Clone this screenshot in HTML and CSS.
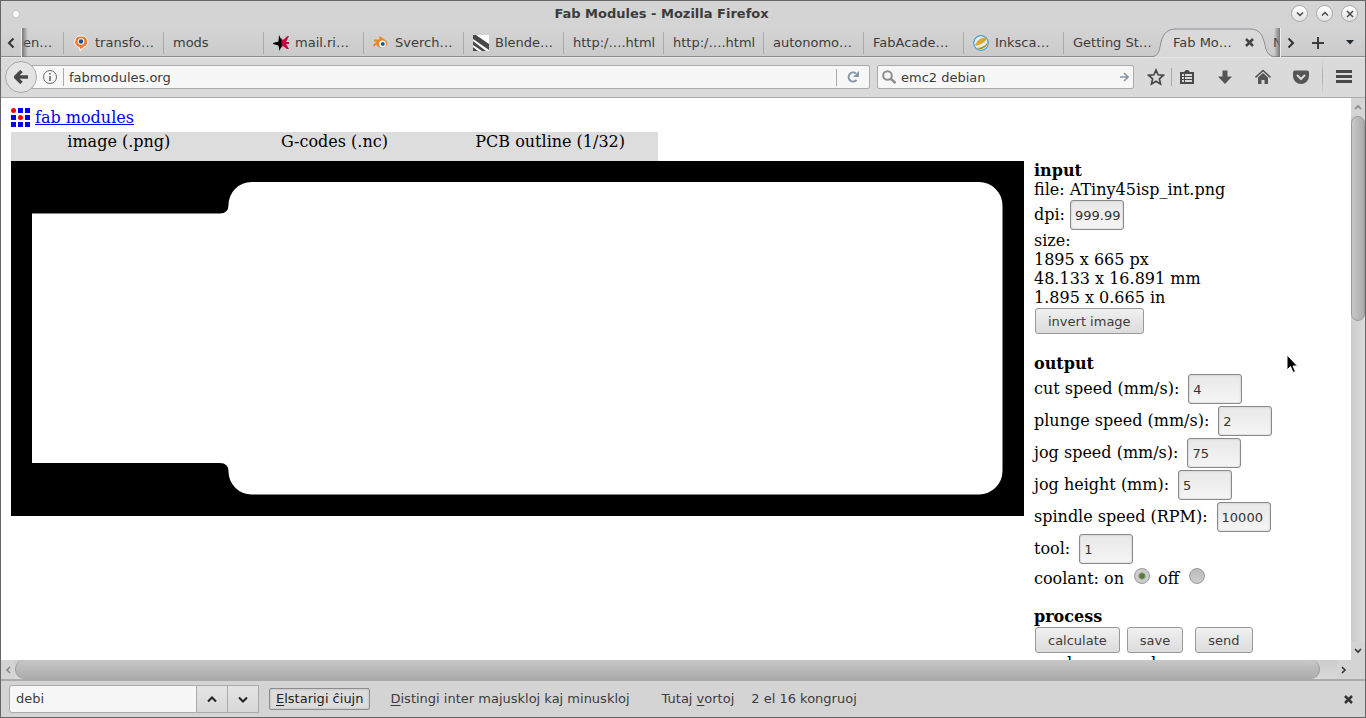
FILE: index.html
```html
<!DOCTYPE html>
<html lang="eo">
<head>
<meta charset="utf-8">
<title>Fab Modules</title>
<link rel="stylesheet" href="styles.css">
</head>
<body>
<div class="window">
  <header class="titlebar">
    <span class="dot"></span>
    <h1 class="title">Fab Modules - Mozilla Firefox</h1>
    <div class="window-buttons">
      <button class="round" aria-label="Minimize"><svg width="8" height="8"><path d="M1 2.5l3 3 3-3"/></svg></button>
      <button class="round" aria-label="Maximize"><svg width="8" height="8"><path d="M1 5.5l3-3 3 3"/></svg></button>
      <button class="round" aria-label="Close"><svg width="8" height="8"><path d="M1 1l6 6M7 1l-6 6"/></svg></button>
    </div>
  </header>

  <nav class="tabstrip">
    <button class="scroll-tabs" aria-label="Previous tabs"><svg width="8" height="12"><path d="M6.500 1.500L2 6l4.500 4.500"/></svg></button>
    <div class="tabs">
      <button class="tab first">en…</button>
      <button class="tab"><svg width="16" height="16"><path d="M8 1a5.800 5.800 0 0 0-3 11l2 1.200V16l3-3.500A5.800 5.800 0 0 0 8 1z" fill="#f07830" stroke="#fff"/><circle cx="8" cy="6.500" r="3.300" fill="#fff"/><circle cx="8" cy="6.500" r="2.200" fill="#20508c"/></svg>transfo…</button>
      <button class="tab">mods</button>
      <button class="tab"><svg width="16" height="16"><path d="M8 3l2 2 4.500-4H16l-3 6h3v2h-3l3 5h-2l-4-3-2 2z" fill="#c8003c"/><path d="M6 0l2.500 5v6L6.500 16 5.500 10.500 0 9V8l5.500-1.500z" fill="#000"/></svg>mail.ri…</button>
      <button class="tab"><svg width="16" height="16"><path d="M1 4.500h6L5.500 2.500 7.500 1.500l6.500 5a5.500 4.800 0 1 1-10.500 3L1 11.500 0 10l4-3.500H1z" fill="#ee8420"/><circle cx="9.500" cy="9" r="3.400" fill="#fff"/><circle cx="9.800" cy="9" r="2" fill="#205a94"/></svg>Sverch…</button>
      <button class="tab"><svg width="16" height="16"><path fill="#fff" d="M0 0h16v16H0z"/><path d="M0 0h3l13 9v6L0 4zM0 6l13 10H9L0 10zM0 12l5 4H0z" fill="#484848"/></svg>Blende…</button>
      <button class="tab">http:/….html</button>
      <button class="tab">http:/….html</button>
      <button class="tab">autonomo…</button>
      <button class="tab">FabAcade…</button>
      <button class="tab"><svg width="16" height="16"><circle cx="8" cy="8" r="7.300" fill="#e2edf2" stroke="#4e9fca" stroke-width="1.200"/><path d="M2 11C3 6 8 2 13 2.500c2 2-3 7-11 8.500z" fill="#dba82c"/><path d="M4 13c5 0 10-3 11-7 0 5-5 9-9 8z" fill="#b58b24"/></svg>Inksca…</button>
      <button class="tab last-plain">Getting St…</button>
      <div class="tab active">
        <svg class="tab-shape" width="130" height="31"><path d="M0 29.500C9 29.500 10.500 26 12 19 14 8 17 1.500 28 1.500H102C112 1.500 115 8 117 17 118.500 25 121 29.500 130 29.500V31H0z" fill="#d9d9d9"/><path d="M0 29C9 29 10.500 26 12 19 14 8 17 1 28 1H102C112 1 115 8 117 17 118.500 25 121 29 130 29" fill="none" stroke="#8d9096"/></svg>
        <span class="tab-label">Fab Mo…</span>
        <button class="tab-close" aria-label="Close tab"><svg width="9" height="9"><path d="M1 1l7 7M8 1L1 8"/></svg></button>
      </div>
      <button class="tab next">N</button>
    </div>
    <button class="scroll-tabs right" aria-label="Next tabs"><svg width="8" height="12"><path d="M1.500 1.500L6 6l-4.500 4.500"/></svg></button>
    <button class="strip-button" aria-label="New tab"><svg width="12" height="12"><path d="M6 0v12M0 6h12" stroke="#3c3c3c" stroke-width="2"/></svg></button>
    <button class="strip-button" aria-label="List all tabs"><svg width="8" height="5"><path d="M0 0h8L4 4.500z" fill="#222c38"/></svg></button>
  </nav>

  <div class="toolbar">
    <button class="back" aria-label="Back"><svg width="14" height="14"><path d="M7.500 1L1.500 7l6 6M2 7h12" fill="none" stroke="#484848" stroke-width="3.400"/></svg></button>
    <div class="urlbar">
      <svg width="16" height="16"><circle cx="8" cy="8" r="6.500" fill="none" stroke="#6a6a6a"/><path d="M8 7v5M8 4v1.500" fill="none" stroke="#666" stroke-width="1.600"/></svg>
      <input class="url" type="text" aria-label="Address" value="fabmodules.org">
      <button class="reload" aria-label="Reload"><svg width="12" height="12"><path d="M9.500 9A4.500 4.500 0 1 1 9 2.500" fill="none" stroke="#8496a8" stroke-width="2"/><path d="M12 0v6H6z" fill="#8496a8"/></svg></button>
    </div>
    <div class="searchbar">
      <svg width="14" height="14"><circle cx="5.500" cy="5.500" r="4.300" fill="none" stroke="#8e8e8e" stroke-width="2"/><path d="M8.500 8.500l5 4.500" stroke="#8e8e8e" stroke-width="2.400"/></svg>
      <input class="query" type="text" aria-label="Search" value="emc2 debian">
      <button class="go" aria-label="Search"><svg width="9" height="10"><path d="M0 5h8M4 1l4 4-4 4" fill="none" stroke="#8496a8" stroke-width="1.600"/></svg></button>
    </div>
    <button class="tool star" aria-label="Bookmark"><svg width="18" height="18"><path d="M9 2l2.100 4.800 5.200.5-3.900 3.500 1.100 5.200L9 13.300 4.500 16l1.100-5.200L1.700 7.300l5.200-.5z" fill="none" stroke="#484848" stroke-width="1.700"/></svg></button>
    <button class="tool list" aria-label="Bookmarks"><svg width="16" height="16"><path d="M1 3h4l2-2h2l2 2h4v12H1z" fill="#484848"/><path d="M3 5h2v2H3zM6 5h7v2H6zM3 8h2v2H3zM6 8h7v2H6zM3 11h2v2H3zM6 11h7v2H6z" fill="#dadada"/></svg></button>
    <button class="tool" aria-label="Downloads"><svg width="16" height="16"><path d="M5.500 1.500h5v6H15L8 15 1 7.500h4.500z" fill="#555"/></svg></button>
    <button class="tool" aria-label="Home"><svg width="16" height="16"><path d="M.5 8.500L8 1.500l7.500 7" fill="none" stroke="#555" stroke-width="1.600"/><path d="M3 8.500l5-4.500 5 4.500V15H9.500v-4h-3v4H3z" fill="#555"/></svg></button>
    <button class="tool" aria-label="Pocket"><svg width="16" height="16"><path d="M2 1.500h12a2 2 0 0 1 2 2V7a8 8 0 0 1-16 0V3.500a2 2 0 0 1 2-2z" fill="#555"/><path d="M4 6l4 4 4-4" fill="none" stroke="#dadada" stroke-width="2"/></svg></button>
    <button class="tool menu" aria-label="Menu"><svg width="16" height="14"><path d="M0 0h16v3H0zM0 5h16v3H0zM0 10h16v3H0z" fill="#484848"/></svg></button>
  </div>

  <div class="viewport">
    <main class="page">
      <a class="brand" href="#"><svg width="19" height="19"><path d="M7 0h5v5H7zM14 0h5v5h-5zM0 7h5v5H0zM14 7h5v5h-5zM0 14h5v5H0zM7 14h5v5H7zM14 14h5v5h-5z" fill="#00f"/><circle cx="2.500" cy="2.500" r="2.500" fill="red"/><circle cx="9.500" cy="9.500" r="2.500" fill="red"/></svg><span>fab modules</span></a>
      <div class="choices"><span>image (.png)</span><span>G-codes (.nc)</span><span>PCB outline (1/32)</span></div>
      <div class="workspace">
        <svg class="board" viewBox="0 0 1013 355"><path fill="#000" d="M0 0h1013v355H0z"/><path fill="#fff" d="M21 52.500H209Q217.500 52.500 217.500 44A23 23 0 0 1 240.500 21H968A23.500 23.500 0 0 1 991.500 44.500V310A23.500 23.500 0 0 1 968 333.500H240.500A23 23 0 0 1 217.500 310.500Q217.500 302 209 302H21z"/></svg>
        <form class="controls">
          <h2>input</h2>
          <p>file: ATiny45isp_int.png</p>
          <div class="field tight"><label for="dpi">dpi:</label><input id="dpi" type="text" value="999.99"></div>
          <p>size:</p>
          <p>1895 x 665 px</p>
          <p>48.133 x 16.891 mm</p>
          <p>1.895 x 0.665 in</p>
          <div class="actions"><button type="button">invert image</button></div>
          <h2 class="section">output</h2>
          <div class="field"><label for="cut">cut speed (mm/s):</label><input id="cut" type="text" value="4"></div>
          <div class="field"><label for="plunge">plunge speed (mm/s):</label><input id="plunge" type="text" value="2"></div>
          <div class="field"><label for="jog">jog speed (mm/s):</label><input id="jog" type="text" value="75"></div>
          <div class="field"><label for="height">jog height (mm):</label><input id="height" type="text" value="5"></div>
          <div class="field"><label for="spindle">spindle speed (RPM):</label><input id="spindle" type="text" value="10000"></div>
          <div class="field"><label for="tool">tool:</label><input id="tool" type="text" value="1"></div>
          <div class="coolant"><label for="on">coolant: on</label><input id="on" type="radio" name="coolant" checked><label for="off">off</label><input id="off" type="radio" name="coolant"></div>
          <h2 class="section">process</h2>
          <div class="actions"><button type="button">calculate</button><button type="button">save</button><button type="button" class="send">send</button></div>
          <p>send command:</p>
        </form>
      </div>
      <svg class="cursor" width="12" height="20"><path d="M1 1v15l3.500-3.500 2.500 6 2.500-1-2.500-5.500h4.500z" fill="#000" stroke="#fff"/></svg>
    </main>
    <div class="vbar">
      <svg class="arrow faint" width="8" height="6"><path d="M1 5l3-3 3 3"/></svg>
      <div class="vtrack"><div class="vthumb"></div></div>
      <svg class="arrow" width="8" height="6"><path d="M1 1l3 3 3-3"/></svg>
    </div>
  </div>
  <div class="hbar">
    <svg class="arrow faint" width="6" height="8"><path d="M5 1L2 4l3 3"/></svg>
    <div class="htrack"><div class="hthumb"></div></div>
    <svg class="arrow" width="6" height="8"><path d="M1 1l3 3-3 3"/></svg>
    <span class="corner"></span>
  </div>

  <footer class="findbar">
    <div class="find">
      <input type="text" aria-label="Find" value="debi">
      <button aria-label="Previous match"><svg width="10" height="7"><path d="M1 5.500L5 1.500l4 4"/></svg></button>
      <button aria-label="Next match"><svg width="10" height="7"><path d="M1 1.500l4 4 4-4"/></svg></button>
    </div>
    <button class="highlight"><u>E</u>lstarigi ĉiujn</button>
    <button class="plain case"><u>D</u>istingi inter majuskloj kaj minuskloj</button>
    <button class="plain whole">Tutaj <u>v</u>ortoj</button>
    <span class="matches">2 el 16 kongruoj</span>
    <button class="close-find" aria-label="Close find bar"><svg width="9" height="9"><path d="M1 1l7 7M8 1L1 8"/></svg></button>
  </footer>
</div>
</body>
</html>
```

FILE: styles.css
```css
* { box-sizing: border-box; }
body {
  margin: 0;
  color: #3c3c3c;
  font: 13px/16px "DejaVu Sans", sans-serif;
}
button, input { margin: 0; padding: 0; color: inherit; font: inherit; }
button { border: 0; background: none; }
svg { display: block; flex: none; }
.window {
  display: flex;
  flex-direction: column;
  height: 100vh;
  overflow: hidden;
  border: 1px solid #666;
  background: #d4d4d4;
}

.titlebar { display: flex; align-items: center; flex: none; height: 27px; padding: 0 7px 2px 11px; }
.dot { width: 8px; height: 8px; border: 1px solid #c4c4c4; border-radius: 50%; background: #fff; }
.title { flex: 1; margin: 0; padding-left: 12px; font-size: 13px; line-height: 16px; text-align: center; }
.window-buttons { display: flex; gap: 8px; }
.round {
  display: grid;
  place-items: center;
  width: 17px;
  height: 17px;
  border: 1px solid #a8a8a8;
  border-radius: 50%;
  background: linear-gradient(#fff, #e2e2e2);
}
.round svg { fill: none; stroke: #484848; stroke-width: 1.5px; }

.tabstrip {
  display: flex;
  flex: none;
  height: 29px;
  padding-right: 1px;
  background: linear-gradient(#d4d4d4, #cacaca);
  box-shadow: inset 0 -1px #8d8d8d;
}
.scroll-tabs { display: grid; place-items: center; width: 21px; border-right: 1px solid #eee; }
.scroll-tabs.right { width: 20px; border: 0; border-left: 1px solid #eee; }
.scroll-tabs svg { fill: none; stroke: #333; stroke-width: 2px; }
.tabs { position: relative; display: flex; flex: 1; overflow: hidden; }
.tabs::before, .tabs::after {
  position: absolute;
  z-index: 2;
  top: 0;
  bottom: 0;
  width: 6px;
  content: "";
}
.tabs::before { left: 0; background: linear-gradient(90deg, #777, #7770); }
.tabs::after { right: 0; background: linear-gradient(270deg, #777, #7770); }
.tab {
  display: flex;
  flex: none;
  align-items: center;
  gap: 6px;
  width: 100px;
  padding: 0 0 0 9px;
  background: linear-gradient(#aaa, #aaa) right 4px / 1px 22px no-repeat;
  background-position: right 4px;
  white-space: nowrap;
}
.tab.first { width: 42px; padding-left: 1px; }
.tab.last-plain { width: 92px; background: none; }
.tab.active { position: relative; gap: 7px; width: 108px; padding-left: 17px; background: none; }
.tab.next { padding-left: 9px; background: none; }
.tab-shape { position: absolute; top: 0; left: -8px; }
.tab-label, .tab-close { position: relative; }
.tab-label { width: 65px; }
.tab-close svg { stroke: #444; stroke-width: 2.5px; }
.strip-button { display: grid; place-items: center; width: 36px; }
.strip-button + .strip-button { width: 28px; }

.toolbar {
  display: flex;
  flex: none;
  align-items: center;
  height: 41px;
  padding: 0 0 0 4px;
  border-bottom: 1px solid #aaa;
  background: #dadada;
  box-shadow: inset 0 1px #e8e8e8;
}
.back {
  z-index: 1;
  display: grid;
  flex: none;
  place-items: center;
  width: 32px;
  height: 32px;
  border: 1px solid #aaa;
  border-radius: 50%;
  background: #e3e3e3;
}
.urlbar, .searchbar { display: flex; align-items: center; height: 24px; border: 1px solid #aaa; border-radius: 2px; background: #f7f7f7; }
.urlbar { flex: 1; margin-left: -12px; padding-left: 16px; }
.toolbar input { min-width: 0; height: 18px; border: 0; background: none; }
.toolbar .url { flex: 1; margin-left: 5px; padding-left: 5px; border-left: 1px solid #aaa; }
.reload { display: grid; place-items: center; width: 33px; height: 17px; border-left: 1px solid #aaa; }
.searchbar { width: 257px; margin: 0 6px 0 7px; padding: 0 4px; gap: 5px; }
.query { flex: 1; }
.tool { display: grid; flex: none; place-items: center; width: 38px; height: 36px; }
.tool.star { width: 31px; }
.tool.list { width: 35px; padding-right: 3px; background: linear-gradient(#aaa, #aaa) left center / 1px 18px no-repeat; }
.tool.menu { width: 43px; margin-left: 2px; background: linear-gradient(#dadada, #aaa, #dadada) left center / 1px 36px no-repeat; }

.viewport { display: flex; flex: 1; min-height: 0; background: #fff; }
.page {
  position: relative;
  flex: 1;
  min-width: 0;
  overflow: hidden;
  padding: 10px 0 0 10px;
  color: #000;
  font: 16px/19px "DejaVu Serif", serif;
}
.brand { display: flex; gap: 5px; width: max-content; margin-bottom: 5px; color: #00e; text-decoration: none; }
.brand span { text-decoration: underline; }
.choices { display: grid; grid-template-columns: repeat(3, 1fr); width: 647px; height: 29px; background: #ddd; text-align: center; }
.workspace { display: flex; align-items: flex-start; gap: 10px; }
.board { flex: 1; min-width: 0; height: auto; }
.controls { flex: none; width: 317px; }
h2 { margin: 0; font-size: 16px; line-height: 19px; }
h2.section { margin-top: 19px; }
p { margin: 0; }
.field { display: flex; align-items: center; gap: 9px; height: 32px; }
.field.tight { gap: 5px; }
.field label { padding-bottom: 2px; }
.field input {
  width: 54px;
  height: 30px;
  padding: 0 0 0 4px;
  border: 1px solid #888;
  border-radius: 3px;
  background: linear-gradient(#e8e8e8, #f5f5f5);
  box-shadow: inset 0 0 2px #bbb;
  color: #333;
  font: 13px/16px "DejaVu Sans", sans-serif;
}
.actions { display: flex; align-items: center; gap: 7px; height: 28px; padding-left: 1px; }
.actions button {
  height: 26px;
  padding: 1px 12px 0;
  border: 1px solid #999;
  border-radius: 3px;
  background: linear-gradient(#f0f0f0, #dcdcdc);
  color: #3c3c3c;
  font: 13px/16px "DejaVu Sans", sans-serif;
}
.actions .send { margin-left: 5px; }
.coolant { display: flex; align-items: center; height: 23px; padding-top: 3px; }
.coolant input {
  width: 16px;
  height: 16px;
  margin: 0 8px 4px 10px;
  border: 1px solid #999;
  border-radius: 50%;
  appearance: none;
  background: linear-gradient(#bbb, #ccc);
}
.coolant input:checked { background: radial-gradient(circle, #567c38 0 2px, #7d976a 3px, #ccc 4px); }
.cursor { position: absolute; top: 256px; left: 1285px; }

.vbar { display: flex; flex: none; flex-direction: column; align-items: center; width: 14px; background: #d4d4d4; }
.arrow { fill: none; stroke: #333; stroke-width: 1.6px; }
.arrow.faint { stroke: #888; }
.vbar .arrow { margin: 6px 0; }
.vtrack { flex: 1; width: 100%; background: linear-gradient(90deg, #ccc, #dadada); }
.vthumb { height: 39%; border: 1px solid #999; border-radius: 7px; background: linear-gradient(90deg, #c8c8c8, #aaa); }
.hbar { display: flex; flex: none; align-items: center; height: 21px; border-bottom: 2px solid #aaa; }
.hbar .arrow { margin: 0 4px; }
.htrack { flex: 1; height: 100%; padding-right: 17px; background: linear-gradient(#ccc, #dadada); }
.hthumb { height: 100%; border: 1px solid #999; border-width: 0 1px; border-radius: 10px; background: linear-gradient(#c8c8c8, #aaa); }
.corner { width: 14px; }

.findbar { display: flex; flex: none; align-items: center; height: 36px; padding: 0 12px 0 8px; }
.find { display: flex; height: 28px; }
.find input { width: 188px; padding: 0 6px; border: 1px solid #aaa; border-radius: 3px 0 0 3px; background: #f7f7f7; }
.find button { display: grid; place-items: center; width: 31px; border: 1px solid #aaa; border-left: 0; background: linear-gradient(#e4e4e4, #d8d8d8); }
.find svg { fill: none; stroke: #222; stroke-width: 2px; }
.highlight { height: 22px; margin-left: 10px; padding: 0 6px; border: 1px solid #8c8c8c; border-radius: 2px; background: #dcdcdc; box-shadow: inset 0 0 2px #aaa; color: #222; }
.findbar u { text-underline-offset: 2px; }
.case { margin-left: 20px; }
.whole { margin-left: 32px; }
.matches { margin-left: 17px; }
.close-find { margin-left: auto; }
.close-find svg { stroke: #333; stroke-width: 2.5px; }
```
